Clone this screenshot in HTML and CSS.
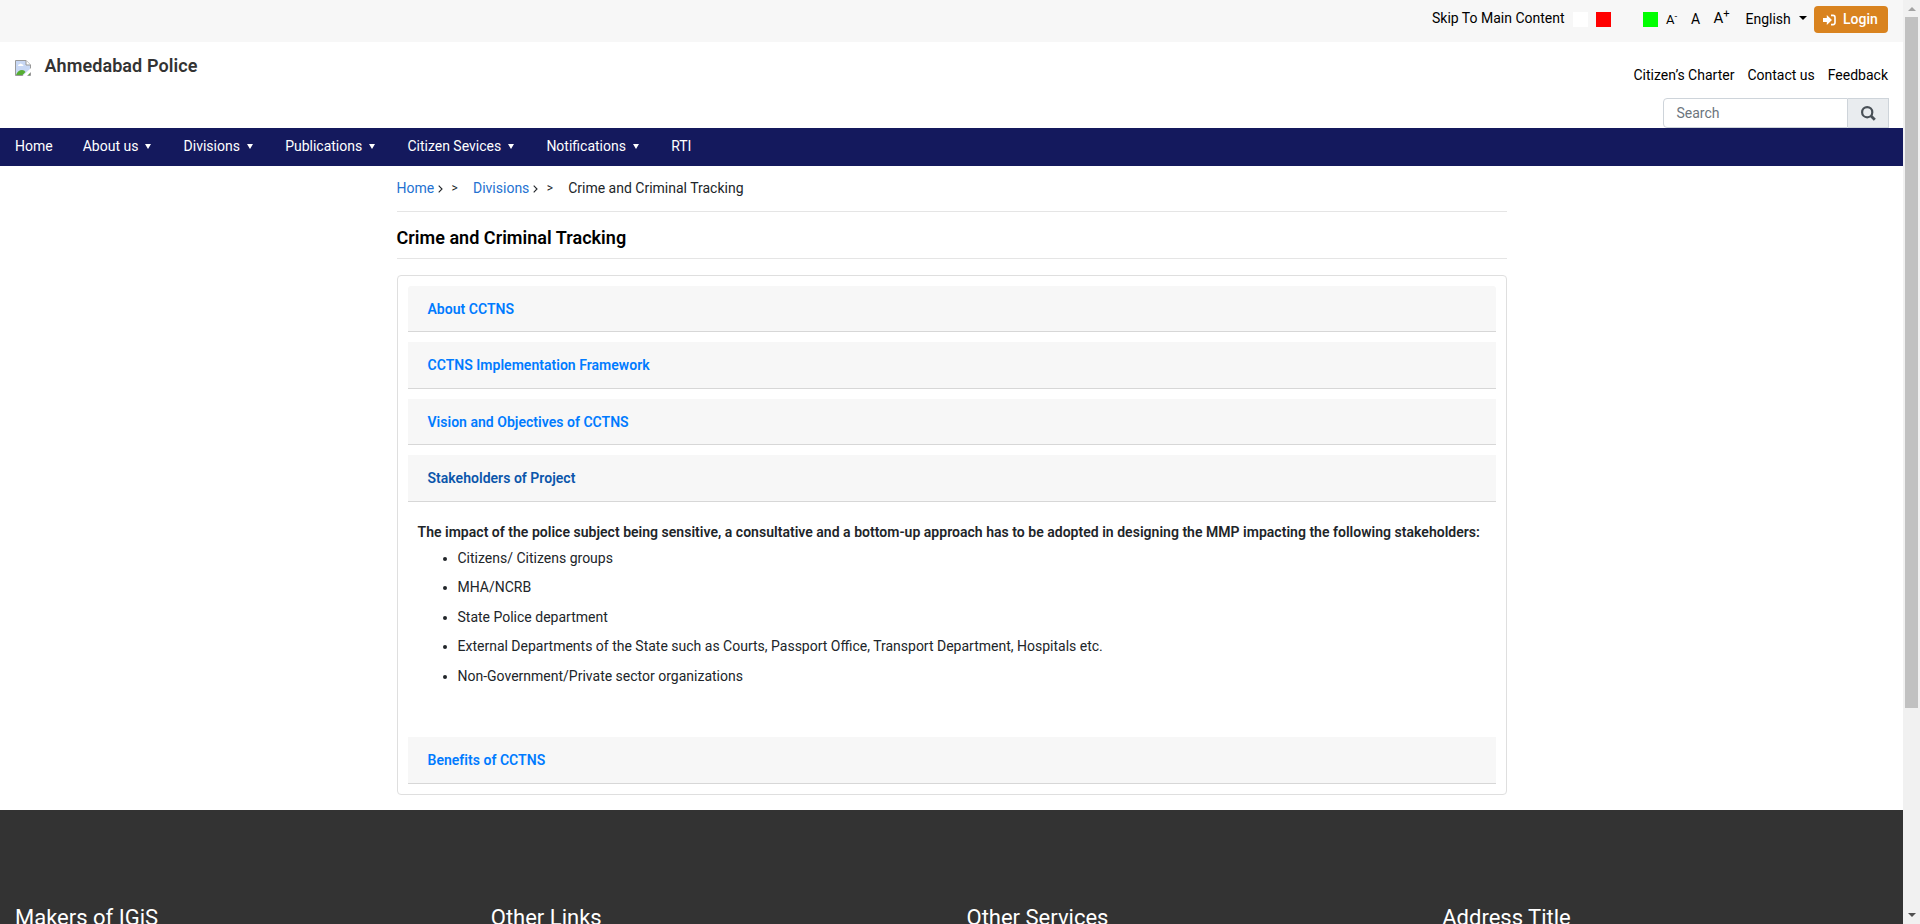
FILE: index.html
```html
<!DOCTYPE html>
<html lang="en">
<head>
<meta charset="utf-8">
<title>Ahmedabad Police</title>
<link rel="stylesheet" href="styles.css">
</head>
<body>
<div class="window">
<div class="page">
  <div class="topbar">
    <a class="skip">Skip To Main Content</a>
    <span class="swatch white"></span><span class="swatch red"></span><span class="swatch grey"></span><span class="swatch green"></span>
    <a class="size small">A<sup>-</sup></a><a class="size normal">A</a><a class="size large">A<sup>+</sup></a>
    <a class="language">English<span class="caret"></span></a>
    <a class="login"><svg width="13" height="14" viewBox="0 0 13 14"><path d="M0 5h3.800V2L9 7l-5.200 5V9H0z" fill="#fff"/><path d="M8 2.400h2q2 0 2 2v5.200q0 2-2 2H8" fill="none" stroke="#fff" stroke-width="1.600"/></svg>Login</a>
  </div>
  <header class="header">
    <div class="brand">
      <svg width="16" height="16" viewBox="0 0 16 16"><path d="M.5 15.500V.5h10.500l4.500 4.500v10.500z" fill="#c8d8f5" stroke="#999"/><path d="M11 .5V5h4.500" fill="#fff" stroke="#999"/><path d="M3 6q0-2 1.700-1.700Q5.500 2.500 7 4.300 8.500 4.300 8.500 6z" fill="#fff"/><path d="M1 15q2-5 6-5 2.500 0 3.500 2l-3 3zM12 15l3-3v3z" fill="#56ad32"/><path d="M7.500 16 16 8v4l-4 4z" fill="#fff"/></svg>
      <span class="brand-name">Ahmedabad Police</span>
    </div>
    <div class="tools">
      <div class="links"><a>Citizen’s Charter</a><a>Contact us</a><a>Feedback</a></div>
      <div class="search">
        <span class="field">Search</span>
        <span class="go"><svg width="15" height="15" viewBox="0 0 15 15" fill="none" stroke="#495057"><circle cx="6.200" cy="6.200" r="5.100" stroke-width="2.200"/><path d="m9.800 9.800 4 4" stroke-width="2.800"/></svg></span>
      </div>
    </div>
  </header>
  <nav class="nav">
    <a>Home</a>
    <a class="drop">About us</a>
    <a class="drop">Divisions</a>
    <a class="drop">Publications</a>
    <a class="drop">Citizen Sevices</a>
    <a class="drop">Notifications</a>
    <a>RTI</a>
  </nav>
  <main class="container">
    <div class="crumbs">
      <a>Home</a><svg class="chevron" width="5" height="8" viewBox="0 0 5 8"><path d="m.7.700 3.300 3.300L.7 7.300" fill="none" stroke="#212529" stroke-width="1.100"/></svg><span class="separator">&gt;</span>
      <a>Divisions</a><svg class="chevron" width="5" height="8" viewBox="0 0 5 8"><path d="m.7.700 3.300 3.300L.7 7.300" fill="none" stroke="#212529" stroke-width="1.100"/></svg><span class="separator">&gt;</span>
      <span>Crime and Criminal Tracking</span>
    </div>
    <h1 class="title">Crime and Criminal Tracking</h1>
    <div class="accordion">
      <div class="item first">About CCTNS</div>
      <div class="item">CCTNS Implementation Framework</div>
      <div class="item">Vision and Objectives of CCTNS</div>
      <div class="item active">Stakeholders of Project</div>
      <div class="panel">
        <strong>The impact of the police subject being sensitive, a consultative and a bottom-up approach has to be adopted in designing the MMP impacting the following stakeholders:</strong>
        <ul>
          <li>Citizens/ Citizens groups</li>
          <li>MHA/NCRB</li>
          <li>State Police department</li>
          <li>External Departments of the State such as Courts, Passport Office, Transport Department, Hospitals etc.</li>
          <li>Non-Government/Private sector organizations</li>
        </ul>
      </div>
      <div class="item">Benefits of CCTNS</div>
    </div>
  </main>
  <footer class="footer">
    <h2>Makers of IGiS</h2><h2>Other Links</h2><h2>Other Services</h2><h2>Address Title</h2>
  </footer>
</div>
<div class="scrollbar">
  <span class="arrow up"></span>
  <span class="thumb"></span>
  <span class="arrow down"></span>
</div>
</div>
</body>
</html>
```

FILE: styles.css
```css
* { box-sizing: border-box; }
body { margin: 0; overflow: hidden; background: #fff; color: #212529; font: 400 14px/21px Roboto, sans-serif; }
.window { display: flex; height: 924px; overflow: hidden; }
.page { display: flex; flex-direction: column; width: 1903px; overflow: hidden; }

.topbar { display: flex; align-items: flex-start; justify-content: flex-end; flex: none; height: 42px; padding-right: 15px; background: #f7f7f7; color: #000; }
.skip { width: 133px; margin: 8px 8px 0 0; white-space: nowrap; }
.swatch { width: 15px; height: 15px; margin: 12px 8px 0 0; }
.white { background: #fff; }
.red { background: #f00; }
.grey { background: #f7f7f7; }
.green { background: #0f0; }
.size { white-space: nowrap; margin-top: 9px; }
.size sup { font-size: 75%; line-height: 0; vertical-align: baseline; position: relative; top: -0.5em; }
.small { width: 25px; font-size: 13px; }
.normal { width: 22.5px; font-size: 14px; }
.large { width: 32px; font-size: 15px; margin-top: 8px; }
.language { display: flex; align-items: center; width: 68.5px; margin-top: 9px; }
.caret { margin: -3px 0 0 8px; border: 4px solid transparent; border-top-color: #000; border-bottom: 0; }
.red { margin-right: 9px; }
.login { display: flex; align-items: center; width: 74px; height: 27px; margin-top: 6px; padding-left: 9px; gap: 7px; border-radius: 4px; background: #d9831f; color: #fff; font-weight: 500; }

.header { display: flex; justify-content: space-between; flex: none; height: 86px; padding: 0 14px 0 15px; }
.brand { display: flex; align-items: flex-start; gap: 13.5px; padding-top: 12px; }
.brand svg { margin-top: 6px; }
.brand-name { font-size: 18px; line-height: 24px; font-weight: 600; letter-spacing: 0.08px; color: #333; }
.tools { display: flex; flex-direction: column; align-items: flex-end; padding-top: 23px; }
.links { display: flex; gap: 13px; padding: 0 1px; line-height: 21px; color: #000; }
.search { display: flex; width: 226px; height: 30px; margin-top: 12px; }
.field { width: 185px; padding: 4px 12.5px; border: 1px solid #ced4da; border-radius: 4px 0 0 4px; color: #6c757d; }
.go { display: flex; align-items: center; justify-content: center; width: 41px; border: 1px solid #ced4da; border-left-width: 0; background: #e9ecef; }

.nav { display: flex; flex: none; height: 38px; padding: 8px 0 0 15px; gap: 30px; background: #14195d; color: #fff; }
.nav a { height: 21px; }
.drop { display: flex; align-items: center; }
.drop::after { content: ""; margin: 0 2.2px 0 7px; border: 3px solid transparent; border-top: 5px solid #fff; border-bottom: 0; }

.container { flex: none; width: 1110px; height: 644px; margin-left: 396.5px; }
.crumbs { display: flex; align-items: center; height: 46px; border-bottom: 1px solid #e5e5e5; }
.crumbs a { color: #2471d1; }
.chevron { margin: 1px 0 0 4px; }
.separator { width: 21.5px; margin-left: 8.3px; font-size: 12px; }
.title { height: 47px; margin: 0 0 16px; padding-top: 14px; border-bottom: 1px solid #e5e5e5; color: #000; font-size: 18px; line-height: 24px; font-weight: 600; letter-spacing: 0.03px; }
.accordion { height: 520px; padding: 9.8px 10px; border: 1px solid #dfdfdf; border-radius: 4px; }
.item { height: 46.5px; margin-bottom: 10px; padding: 12.8px 20px 0; border-bottom: 1px solid #d7d7d7; background: #f7f7f7; color: #007bff; font-weight: 600; letter-spacing: 0.025px; }
.first { border-radius: 3px 3px 0 0; }
.active { color: #0b56ab; }
.panel { height: 225.5px; padding: 9.9px 10px 0; }
.panel strong { display: block; font-weight: 600; letter-spacing: 0.023px; white-space: nowrap; }
.panel ul { margin: 5px 0 0; padding-left: 40px; }
.panel li { margin-bottom: 8.5px; }

.footer { display: grid; grid-template-columns: repeat(4, 1fr); flex: none; height: 114px; padding-top: 94px; background: #333; color: #fff; overflow: hidden; }
.footer h2 { margin: 0; padding-left: 15px; font-size: 22px; line-height: 27px; font-weight: 400; }

.scrollbar { display: flex; flex-direction: column; justify-content: space-between; width: 17px; height: 924px; padding: 7px 2px; background: #f1f1f1; }
.arrow { align-self: center; flex: none; border: 4px solid transparent; }
.up { border-top: 0; border-bottom-color: #a3a3a3; }
.down { border-bottom: 0; border-top-color: #505050; }
.thumb { flex: none; height: 691px; margin: 6px 0 auto; background: #c1c1c1; }
```
